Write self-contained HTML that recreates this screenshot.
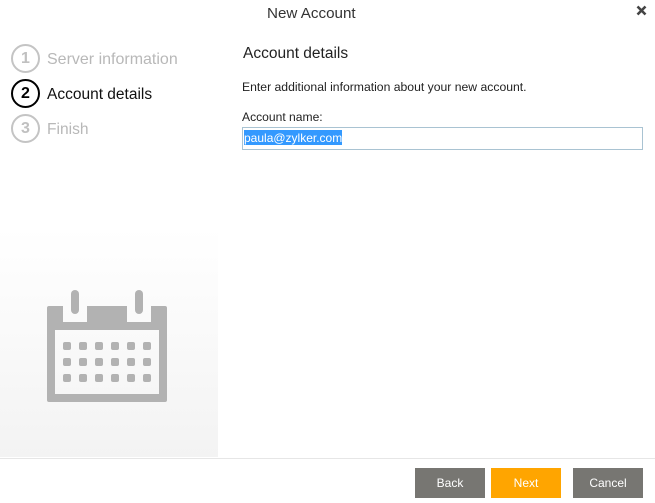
<!DOCTYPE html>
<html>
<head>
<meta charset="utf-8">
<style>
html,body{margin:0;padding:0;background:#fff;}
body{width:655px;height:503px;position:relative;overflow:hidden;font-family:"Liberation Sans",sans-serif;color:#222;}
.t{position:absolute;white-space:nowrap;line-height:20px;}
.c{position:absolute;left:11px;width:25px;height:25px;border:2px solid #c4c4c4;border-radius:50%;text-align:center;line-height:25px;font-size:16px;font-weight:bold;color:#c0c0c0;}
.c.a{border-color:#000;color:#000;}
.b{position:absolute;top:468px;width:70px;height:30px;background:#777672;color:#fff;font-size:12px;line-height:30px;text-align:center;}
</style>
</head>
<body>
<div style="position:absolute;left:0;top:228px;width:218px;height:229px;background:linear-gradient(#fff,#f3f3f3)"></div>
<div style="position:absolute;left:0;top:458px;width:655px;height:1px;background:#e6e6e6"></div>

<div class="t" style="left:267px;top:4px;font-size:15.2px;color:#333">New Account</div>
<svg style="position:absolute;left:636px;top:5px" width="11" height="11" viewBox="0 0 11 11"><path d="M1.5 1.5L9.5 9.5M9.5 1.5L1.5 9.5" stroke="#444" stroke-width="2.6" fill="none"/></svg>

<div class="c" style="top:44px">1</div>
<div class="t" style="left:47px;top:50px;font-size:16px;color:#b8b8b8">Server information</div>
<div class="c a" style="top:79px">2</div>
<div class="t" style="left:47px;top:85px;font-size:15.5px;color:#111">Account details</div>
<div class="c" style="top:114px">3</div>
<div class="t" style="left:47px;top:120px;font-size:15.6px;color:#b8b8b8">Finish</div>

<svg style="position:absolute;left:47px;top:290px" width="120" height="112" viewBox="0 0 120 112">
<path fill="#b2b2b2" d="M2 16H16V32H40V16H80V32H104V16H118Q120 16 120 18V110Q120 112 118 112H2Q0 112 0 110V18Q0 16 2 16ZM8 40V104H112V40Z"/>
<rect x="24" y="0" width="8" height="24" rx="4" fill="#b2b2b2"/>
<rect x="88" y="0" width="8" height="24" rx="4" fill="#b2b2b2"/>
<g fill="#b2b2b2">
<rect x="16" y="52" width="8" height="8" rx="2"/><rect x="32" y="52" width="8" height="8" rx="2"/><rect x="48" y="52" width="8" height="8" rx="2"/><rect x="64" y="52" width="8" height="8" rx="2"/><rect x="80" y="52" width="8" height="8" rx="2"/><rect x="96" y="52" width="8" height="8" rx="2"/>
<rect x="16" y="68" width="8" height="8" rx="2"/><rect x="32" y="68" width="8" height="8" rx="2"/><rect x="48" y="68" width="8" height="8" rx="2"/><rect x="64" y="68" width="8" height="8" rx="2"/><rect x="80" y="68" width="8" height="8" rx="2"/><rect x="96" y="68" width="8" height="8" rx="2"/>
<rect x="16" y="84" width="8" height="8" rx="2"/><rect x="32" y="84" width="8" height="8" rx="2"/><rect x="48" y="84" width="8" height="8" rx="2"/><rect x="64" y="84" width="8" height="8" rx="2"/><rect x="80" y="84" width="8" height="8" rx="2"/><rect x="96" y="84" width="8" height="8" rx="2"/>
</g>
</svg>

<div class="t" style="left:243px;top:44px;font-size:15.5px;color:#222">Account details</div>
<div class="t" style="left:242px;top:77px;font-size:12.2px;color:#222">Enter additional information about your new account.</div>
<div class="t" style="left:242px;top:107px;font-size:12.1px;color:#222">Account name:</div>
<div style="position:absolute;left:242px;top:127px;width:399px;height:21px;border:1px solid #a9c3d2;background:#fff"></div>
<div class="t" style="left:244px;top:130px;width:98px;height:15px;background:#3399ff;color:#fff;font-size:12px;line-height:17px;overflow:hidden">paula@zylker.com</div>

<div class="b" style="left:415px">Back</div>
<div class="b" style="left:491px;background:#ffa500">Next</div>
<div class="b" style="left:573px">Cancel</div>
</body>
</html>
